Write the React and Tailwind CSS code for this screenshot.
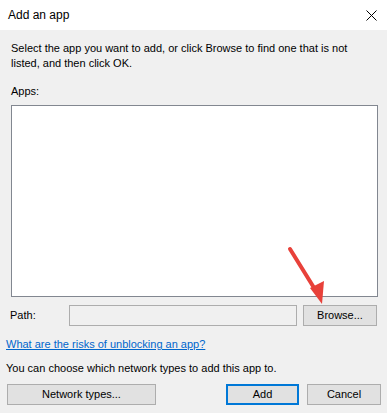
import React from 'react';

const font = { fontFamily: '"Liberation Sans", Arial, sans-serif' };

const WinButton = ({ children, primary, className = '' }) => (
  <button
    className={`h-[21px] text-[11px] leading-none text-black bg-[#e1e1e1] ${primary ? 'border-2 border-[#0078d7]' : 'border border-[#adadad]'} ${className}`}
  >
    {children}
  </button>
);

const AddAppDialog = () => {
  return (
    <div className="relative w-[387px] h-[413px] flex flex-col bg-[#f0f0f0] text-black overflow-hidden" style={font}>
      {/* title bar */}
      <div className="h-[30px] bg-white flex items-center justify-between pl-[8px] pr-[10px] shrink-0">
        <span className="text-[12px] text-black">Add an app</span>
        <svg width="11" height="11" viewBox="0 0 11 11" className="text-black">
          <path d="M0.5 0.5 L10.5 10.5 M10.5 0.5 L0.5 10.5" stroke="currentColor" strokeWidth="1" />
        </svg>
      </div>

      <div className="flex-1 flex flex-col text-[11px] leading-[15px]">
        <p className="px-[11px] pt-[11px] w-[372px]">
          Select the app you want to add, or click Browse to find one that is not listed, and then click OK.
        </p>

        <div className="px-[11px] mt-[13px]">Apps:</div>
        <div className="mx-[11px] mt-[6px] w-[367px] h-[192px] bg-white border border-[#828790]" />

        <div className="flex items-center mt-[8px] h-[21px]">
          <span className="w-[69px] pl-[10px]">Path:</span>
          <div className="w-[228px] h-[21px] border border-[#adadad] bg-[#f0f0f0]" />
          <WinButton className="ml-[6px] w-[74px]">Browse...</WinButton>
        </div>

        <a href="#" className="px-[6px] mt-[11px] text-[#0066cc] underline w-fit">
          What are the risks of unblocking an app?
        </a>

        <div className="px-[6px] mt-[9px]">You can choose which network types to add this app to.</div>

        <div className="flex mt-[8px] pl-[7px]">
          <WinButton className="w-[149px]">Network types...</WinButton>
          <WinButton primary className="ml-[70px] w-[73px]">Add</WinButton>
          <WinButton className="ml-[8px] w-[74px]">Cancel</WinButton>
        </div>
      </div>

      {/* red annotation arrow */}
      <svg className="absolute left-0 top-0 pointer-events-none" width="387" height="413">
        <line x1="290" y1="249" x2="316" y2="291" stroke="#e8413a" strokeWidth="4" strokeLinecap="round" />
        <polygon points="310,288 324,281 322,304" fill="#e8413a" />
      </svg>
    </div>
  );
};

export default function App() {
  return <AddAppDialog />;
}
